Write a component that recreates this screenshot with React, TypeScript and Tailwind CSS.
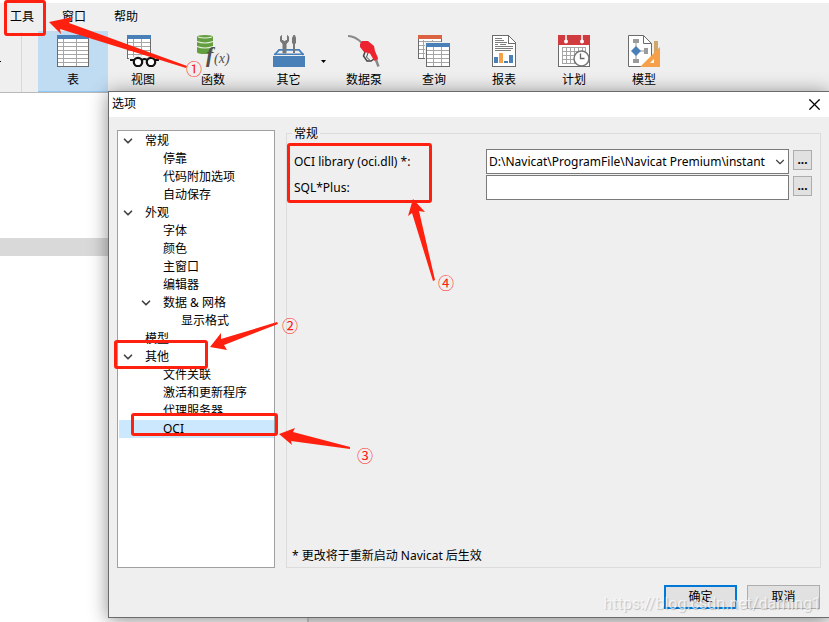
import { useState, type ReactNode } from "react";
import { ChevronDown, X } from "lucide-react";

type ToolItem = { label: string; icon: ReactNode; menu?: boolean };
type TreeNode = { label: string; level: 0 | 1 | 2; open?: boolean };

const TableIcon = () => (
  <svg width="32" height="32" viewBox="0 0 32 32" shapeRendering="crispEdges">
    <rect x="0.5" y="0.5" width="31" height="31" fill="#fff" stroke="#6b6b6b" />
    <rect width="32" height="4" fill="#4a80b8" />
    <path d="M1 7.5h30M1 11.5h30M1 15.5h30M1 19.5h30M1 23.5h30M1 27.5h30M6.5 4v27M19.5 4v27" stroke="#a6a6a6" fill="none" />
  </svg>
);

const ViewIcon = () => (
  <svg width="32" height="32" viewBox="0 0 32 32">
    <g shapeRendering="crispEdges">
      <path d="M0.5 0.5h23v23h-23z" fill="#fff" stroke="#6b6b6b" />
      <rect width="24" height="4" fill="#4a80b8" />
      <path d="M1 7.5h22M1 11.5h22M1 15.5h22M1 19.5h22M6.5 4v18M14.500 4v18" stroke="#a6a6a6" fill="none" />
    </g>
    <path d="M2 22h4l3-2h5l3 2h2l3-2h5l4 2v10H2z" fill="#efefef" />
    <path d="M3 25h4M15 25q2.500-2 5 0M28 25h4" stroke="#111" strokeWidth="2" fill="none" />
    <circle cx="11" cy="27" r="4.200" fill="#fff" stroke="#111" strokeWidth="2.200" />
    <circle cx="24" cy="27" r="4.200" fill="#fff" stroke="#111" strokeWidth="2.200" />
  </svg>
);

const FunctionIcon = () => (
  <svg width="32" height="32" viewBox="0 0 32 32" className="overflow-visible">
    <path d="M0 2q0-2 8-2t8 2v15q0 2-8 2t-8-2z" fill="#649f3f" />
    <path d="M1 2q7 2 14 0M0 6.500q8 3 16 0M0 11.500q8 3 16 0" stroke="#e6efe0" strokeWidth="1.200" fill="none" />
    <path d="M13 14h6v6h-6z" fill="#efefef" opacity="0.600" />
    <text x="9" y="27" fontFamily="Liberation Serif, serif" fontStyle="italic" fontWeight="bold" fontSize="22" fill="#505050">f</text>
    <text x="17" y="28" fontFamily="Liberation Serif, serif" fontStyle="italic" fontSize="14" fill="#505050">(x)</text>
  </svg>
);

const ToolboxIcon = () => (
  <svg width="32" height="32" viewBox="0 0 32 32">
    <path d="M8.500 0.500L7.500 2v4L10 9v9h3V9l2.500-3V2L14.500 0.500V5l-3 1.500-3-1.500z" fill="#777" stroke="#777" />
    <path d="M20.500 0h1.500l1 3v5l-1 1v9h-2V9l-1-1V3z" fill="#777" />
    <path d="M1.500 20L6 14.800h20l4.500 5.200" fill="none" stroke="#4a80b8" strokeWidth="1.800" />
    <path d="M10 13h3v5h-3zM20 13h2v5h-2z" fill="#777" />
    <rect y="21" width="32" height="11" fill="#4a80b8" />
    <rect x="1" y="18.500" width="30" height="1.500" fill="#4a80b8" />
  </svg>
);

const PumpIcon = () => (
  <svg width="32" height="32" viewBox="0 0 32 32">
    <path d="M0 1q7 0 14 7" stroke="#888" strokeWidth="2" fill="none" />
    <path d="M17 17l-1.500 4 3.500 5h4l3-2" stroke="#444" strokeWidth="1.500" fill="#efefef" />
    <path d="M20 18l-1.500 4 3 3" stroke="#444" fill="none" />
    <path d="M12 9l2-3h6l6 5 1 5 3 7-1 3.500-3-1-4-7-6-1.500-4-5z" fill="#ee2330" />
    <path d="M28 25l2.500 6.500" stroke="#888" strokeWidth="2.500" />
  </svg>
);

const QueryIcon = () => (
  <svg width="32" height="32" viewBox="0 0 32 32" shapeRendering="crispEdges">
    <rect x="0.500" y="0.500" width="23" height="23" fill="#fff" stroke="#6b6b6b" />
    <rect width="24" height="4" fill="#db6243" />
    <path d="M1 6.500h22M1 10.500h7M1 14.500h7M1 18.500h7M5.500 5v18M14.500 5v2" stroke="#a6a6a6" />
    <rect x="7" y="7" width="25" height="25" fill="#efefef" />
    <rect x="8.500" y="8.500" width="23" height="23" fill="#fff" stroke="#6b6b6b" />
    <rect x="8" y="8" width="24" height="4" fill="#4a80b8" />
    <path d="M9 15.500h22M9 19.500h22M9 23.500h22M9 27.500h22M15.500 12v19M23.500 12v19" stroke="#a6a6a6" />
  </svg>
);

const ReportIcon = () => (
  <svg width="24" height="32" viewBox="0 0 24 32" shapeRendering="crispEdges">
    <path d="M0.500 0.500h16l7 7v24h-23z" fill="#fff" stroke="#6b6b6b" />
    <path d="M16.500 1v7.500h7" fill="none" stroke="#6b6b6b" />
    <path d="M3 3.500h7M3 5.500h9M3 7.500h12M3 9.500h3M8 9.500h6M3 11.500h18M3 13.500h18M3 15.500h16" stroke="#7d7d7d" />
    <path d="M2 22h4v6h-4zM12 26h4v2h-4zM17 20h4v8h-4z" fill="#4a80b8" />
    <rect x="7" y="18" width="4" height="10" fill="#f7a04a" />
  </svg>
);

const ScheduleIcon = () => (
  <svg width="32" height="32" viewBox="0 0 32 32">
    <g shapeRendering="crispEdges">
      <rect x="0.500" y="0.500" width="31" height="31" fill="#fff" stroke="#6b6b6b" />
      <rect width="32" height="10" fill="#cf3b3f" />
      <path d="M4 12.500h24M4 16.500h22M4 20.500h22M4 24.500h14M4 28.500h14M4.500 12v17M8.500 12v17M12.500 12v17M16.500 12v17M20.500 12v6M24.500 12v4M27.500 12v5" stroke="#a6a6a6" />
    </g>
    <path d="M8 0v6M24 0v6" stroke="#fff" strokeWidth="1.500" />
    <circle cx="8" cy="6.500" r="2" fill="#fff" />
    <circle cx="24" cy="6.500" r="2" fill="#fff" />
    <circle cx="23.500" cy="23.500" r="7.500" fill="#fff" stroke="#777" strokeWidth="1.500" />
    <path d="M22.500 18.500v5h4" fill="none" stroke="#666" strokeWidth="1.300" />
  </svg>
);

const ModelIcon = () => (
  <svg width="32" height="32" viewBox="0 0 32 32">
    <path d="M0.500 0.500h15l8 8v23h-23z" fill="#fff" stroke="#6b6b6b" />
    <path d="M15.500 0.500v8h8" fill="none" stroke="#6b6b6b" />
    <path d="M8 5v22M8 16h10" stroke="#9b9b9b" />
    <path d="M5 4h6v4h-6zM5 24h6v4h-6zM16 13h4v6h-4z" fill="#9b9b9b" />
    <path d="M8 11l5 5-5 5-5-5z" fill="#4a80b8" />
    <path d="M26 6h4v20h-4z" fill="#cfa66c" />
    <path d="M32 12v20H12z" fill="#f7a04a" />
    <path d="M26 24v4h-4z" fill="#fff" />
  </svg>
);

const menus = ["工具", "窗口", "帮助"];

const tools: ToolItem[] = [
  { label: "表", icon: <TableIcon /> },
  { label: "视图", icon: <ViewIcon /> },
  { label: "函数", icon: <FunctionIcon /> },
  { label: "其它", icon: <ToolboxIcon />, menu: true },
  { label: "数据泵", icon: <PumpIcon /> },
  { label: "查询", icon: <QueryIcon /> },
  { label: "报表", icon: <ReportIcon /> },
  { label: "计划", icon: <ScheduleIcon /> },
  { label: "模型", icon: <ModelIcon /> },
];

const tree: TreeNode[] = [
  { label: "常规", level: 0, open: true },
  { label: "停靠", level: 1 },
  { label: "代码附加选项", level: 1 },
  { label: "自动保存", level: 1 },
  { label: "外观", level: 0, open: true },
  { label: "字体", level: 1 },
  { label: "颜色", level: 1 },
  { label: "主窗口", level: 1 },
  { label: "编辑器", level: 1 },
  { label: "数据 & 网格", level: 1, open: true },
  { label: "显示格式", level: 2 },
  { label: "模型", level: 0 },
  { label: "其他", level: 0, open: true },
  { label: "文件关联", level: 1 },
  { label: "激活和更新程序", level: 1 },
  { label: "代理服务器", level: 1 },
  { label: "OCI", level: 1 },
];

const indent = ["pl-0.5", "pl-5", "pl-[38px]"];

function Toolbar() {
  return (
    <div className="flex h-[62px] border-b border-[#b9b9b9]">
      <div className="flex w-[38px] items-center">
        <span className="h-px w-px bg-black" />
        <span className="ml-5 h-[60px] w-px bg-[#d9d9d9]" />
      </div>
      {tools.map((tool, i) => (
        <button
          key={tool.label}
          className={`relative flex h-[61px] shrink-0 flex-col items-center pt-1 ${tool.menu ? "w-[81px]" : "w-[70px]"} ${
            i === 0 ? "border-b border-[#90c8f6] bg-[#c0dcf3]" : ""
          }`}
        >
          {tool.icon}
          <span className="mt-[5px] leading-4">{tool.label}</span>
          {tool.menu && (
            <svg width="5" height="3" viewBox="0 0 5 3" className="absolute right-[3px] top-[29px]">
              <path d="M0 0h5L2.500 3z" fill="#000" />
            </svg>
          )}
        </button>
      ))}
    </div>
  );
}

function OptionTree() {
  const [selected, setSelected] = useState("OCI");
  return (
    <ul className="w-[158px] shrink-0 border border-[#a0a0a0] bg-white pl-px pt-px">
      {tree.map((node, i) => (
        <li key={i}>
          <button
            onClick={() => setSelected(node.label)}
            className={`flex h-[18px] w-full items-center text-left leading-[18px] ${indent[node.level]} ${
              selected === node.label ? "bg-[#cce8ff]" : ""
            }`}
          >
            <span className="w-6">{node.open && <ChevronDown size={14} strokeWidth={3} color="#444" />}</span>
            {node.label}
          </button>
        </li>
      ))}
    </ul>
  );
}

function OptionsDialog() {
  const browse = "mb-1 h-5 w-[19px] border border-[#adadad] bg-[#e1e1e1] text-center leading-4 font-bold";
  return (
    <section
      aria-label="选项"
      className="absolute bottom-1 left-[108px] right-0 top-[91px] flex flex-col border border-r-0 border-[#6b6b6b] bg-[#efefef] shadow-[0_2px_18px_rgba(0,0,0,0.45)]"
    >
      <header className="flex h-[25px] shrink-0 items-center justify-between bg-white pl-[3px] pr-[5px]">
        <h1 className="pb-0.5">选项</h1>
        <button aria-label="关闭">
          <X size={19} strokeWidth={1.500} />
        </button>
      </header>

      <div className="flex min-h-0 flex-1 gap-[11px] pl-2 pr-2 pt-[13px]">
        <OptionTree />
        <fieldset className="relative flex min-w-0 flex-1 flex-col border border-[#dcdcdc] pl-[7px] pr-2 mt-[3px]">
          <span className="absolute -top-2 left-[5px] bg-[#efefef] px-0.5 leading-4">常规</span>
          <div className="grid grid-cols-[192px_1fr_19px] items-center gap-y-px pt-[15px]">
            <label htmlFor="oci">OCI library (oci.dll) *:</label>
            <div className="relative mr-1">
              <select
                id="oci"
                className="block h-[25px] w-full appearance-none border border-[#7a7a7a] bg-white pl-0.5 pr-[18px]"
              >
                <option>D:\Navicat\ProgramFile\Navicat Premium\instant</option>
              </select>
              <ChevronDown size={14} strokeWidth={2} color="#444" className="pointer-events-none absolute right-0.5 top-1.5" />
            </div>
            <button className={browse}>...</button>
            <label htmlFor="sqlplus">SQL*Plus:</label>
            <input id="sqlplus" className="mr-1 h-[25px] border border-[#7a7a7a] bg-white px-1" />
            <button className={browse}>...</button>
          </div>
          <p className="mb-[3px] mt-auto -ml-0.5">* 更改将于重新启动 Navicat 后生效</p>
        </fieldset>
      </div>

      <footer className="flex shrink-0 justify-end gap-2.5 pb-2 pr-[9px] pt-[17px]">
        <button className="h-6 w-[73px] border-2 border-[#0078d7] bg-[#e1e1e1]">确定</button>
        <button className="h-6 w-[73px] border border-[#adadad] bg-[#e1e1e1]">取消</button>
      </footer>
    </section>
  );
}

// Red marker boxes, arrows and step numbers drawn over the window
function Annotations() {
  const box = "absolute rounded-[3px] border-[3px] border-[#ff2010]";
  const num = "absolute text-base leading-5";
  return (
    <div className="pointer-events-none absolute inset-0 text-[#ff2010]">
      <div className={`${box} left-1 top-0 h-9 w-[42px]`} />
      <div className={`${box} left-[287px] top-[143px] h-[60px] w-[145px]`} />
      <div className={`${box} left-[114px] top-[340px] h-[29px] w-[94px]`} />
      <div className={`${box} left-[131px] top-[413px] h-[23px] w-[147px]`} />
      <svg width="829" height="622" viewBox="0 0 829 622" className="absolute left-0 top-0" fill="#ff2010">
        <path d="M49 22L73 17L69 23L187 66L186 68L60 29L61 34Z" />
        <path d="M210 347L221 333L221 339L277 322L278 324L224 345L227 350Z" />
        <path d="M279 434L295 428L293 432L350 447L350 449L291 441L292 445Z" />
        <path d="M413 199L425 212L419 211L435 280L433 281L412 213L408 216Z" />
      </svg>
      <span className={`${num} left-[186px] top-[59px]`}>①</span>
      <span className={`${num} left-[282px] top-[316px]`}>②</span>
      <span className={`${num} left-[357px] top-[446px]`}>③</span>
      <span className={`${num} left-[438px] top-[273px]`}>④</span>
    </div>
  );
}

export default function App() {
  return (
    <div className="relative flex min-h-screen flex-col overflow-hidden bg-white pt-[3px] font-['Noto_Sans','Noto_Sans_CJK_SC',sans-serif] text-xs text-black">
      <div className="bg-[#efefef]">
        <nav className="flex h-7 items-center gap-7 pl-2.5">
          {menus.map((menu) => (
            <button key={menu}>{menu}</button>
          ))}
        </nav>
        <Toolbar />
      </div>
      <div className="mt-[145px] h-[18px] bg-[#d9d9d9]" />
      <div className="ml-[307px] flex-1 border-l-2 border-[#d0d0d0] bg-[#f0f0f0]" />
      <OptionsDialog />
      <Annotations />
      <p className="pointer-events-none absolute bottom-1.5 right-2 font-['Roboto',sans-serif] text-base text-white/70 [text-shadow:1px_1px_1px_rgba(0,0,0,0.2)]">
        https://blog.csdn.net/daming1
      </p>
    </div>
  );
}
